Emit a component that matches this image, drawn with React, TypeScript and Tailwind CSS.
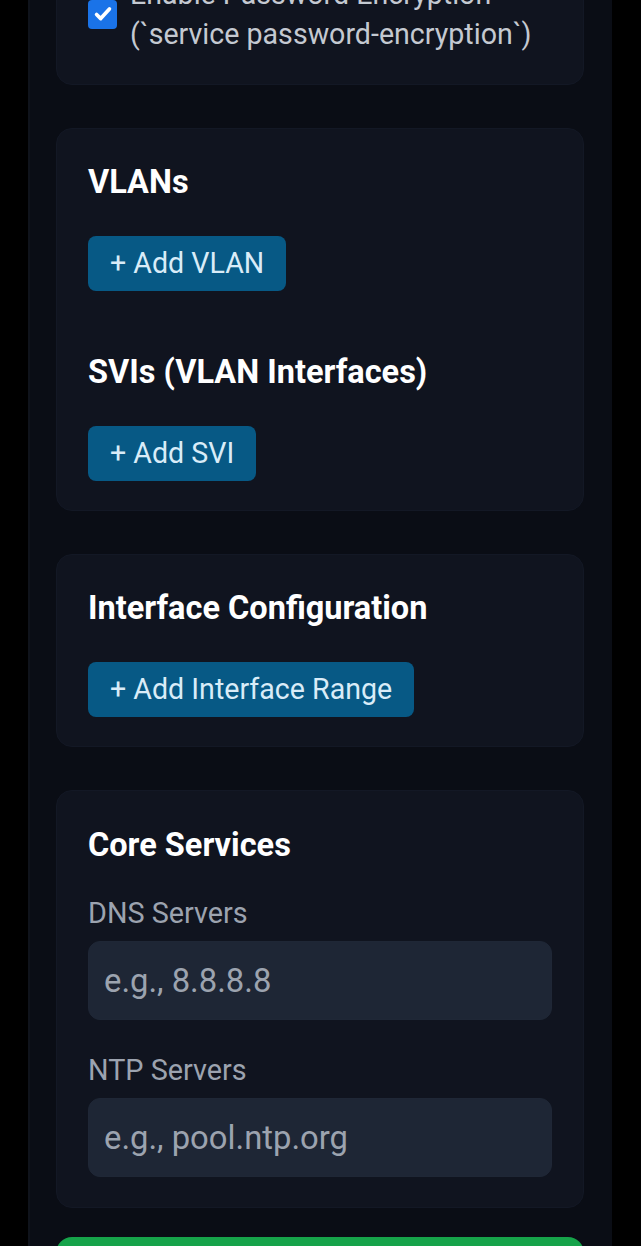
import React from "react";

function AddButton({ label }: { label: string }) {
  return (
    <button
      type="button"
      className="h-[55px] rounded-[8px] bg-[#075985] px-[22px] text-[28.6px] leading-none text-[#d9ecf8]"
    >
      {label}
    </button>
  );
}

function Heading({ children }: { children: React.ReactNode }) {
  return (
    <h2 className="text-[32.5px] font-bold leading-[40px] text-white">{children}</h2>
  );
}

function Field({ label, placeholder }: { label: string; placeholder: string }) {
  return (
    <div className="flex flex-col">
      <label className="text-[28.8px] leading-[36px] text-[#9ca3af]">{label}</label>
      <input
        placeholder={placeholder}
        className="mt-[10px] h-[79px] w-full rounded-[12px] border border-[#1f2736] bg-[#1e2635] px-[15px] text-[32.8px] text-white outline-none placeholder:text-[#9ca3af]"
      />
    </div>
  );
}

export default function App() {
  return (
    <div
      className="flex min-h-screen overflow-hidden bg-black pl-[28px] pr-[29px]"
      style={{ fontFamily: "Roboto, 'Noto Sans', sans-serif" }}
    >
      <div className="flex w-full flex-col gap-[43px] border-l-2 border-[#0f131b] bg-[#0a0d15] pl-[26px] pr-[28px]">
        <section className="-mt-[59px] rounded-[16px] border border-[#131825] bg-[#10141f] px-[31px] pb-[30px] pt-[32px]">
          <div className="flex items-center gap-[13px]">
            <span className="flex h-[29px] w-[29px] shrink-0 items-center justify-center rounded-[4px] bg-[#1a73e8]">
              <svg viewBox="0 0 24 24" className="h-[22px] w-[22px]" fill="none" stroke="white" strokeWidth={4} strokeLinecap="round" strokeLinejoin="round">
                <path d="M5 12.5l4.5 4.5L19 6.5" />
              </svg>
            </span>
            <span className="text-[28.6px] leading-[40px] text-[#c4c9d1]">
              Enable Password Encryption (`service password-encryption`)
            </span>
          </div>
        </section>

        <section className="flex flex-col items-start rounded-[16px] border border-[#131825] bg-[#10141f] px-[31px] pb-[29px] pt-[33px]">
          <Heading>VLANs</Heading>
          <div className="mt-[34px]">
            <AddButton label="+ Add VLAN" />
          </div>
          <div className="mt-[61px]">
            <Heading>SVIs (VLAN Interfaces)</Heading>
          </div>
          <div className="mt-[34px]">
            <AddButton label="+ Add SVI" />
          </div>
        </section>

        <section className="flex flex-col items-start rounded-[16px] border border-[#131825] bg-[#10141f] px-[31px] pb-[29px] pt-[33px]">
          <Heading>Interface Configuration</Heading>
          <div className="mt-[34px]">
            <AddButton label="+ Add Interface Range" />
          </div>
        </section>

        <section className="flex flex-col rounded-[16px] border border-[#131825] bg-[#10141f] px-[31px] pb-[30px] pt-[34px]">
          <Heading>Core Services</Heading>
          <div className="mt-[30px]">
            <Field label="DNS Servers" placeholder="e.g., 8.8.8.8" />
          </div>
          <div className="mt-[32px]">
            <Field label="NTP Servers" placeholder="e.g., pool.ntp.org" />
          </div>
        </section>

        <div className="-mt-[14px] mb-[40px] h-[70px] rounded-[16px] bg-[#16a34a]" />
      </div>
    </div>
  );
}
